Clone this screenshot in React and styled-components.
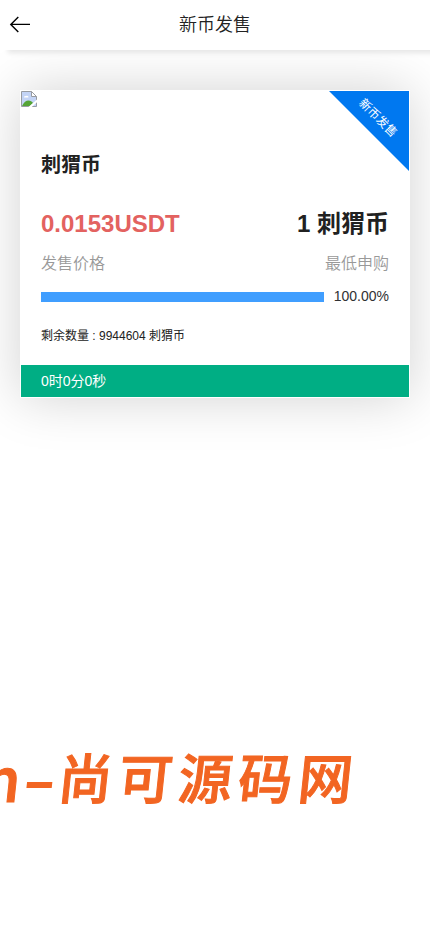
import React from 'react';
import styled, { createGlobalStyle } from 'styled-components';


export default function App(){
    return(
        <>
            <GlobalStyle />
            <Page>
                <Header>
                    <BackButton aria-label="back">
                        <svg width="22" height="18" viewBox="0 0 22 18" fill="none" stroke="#000" strokeWidth="1.4">
                            <path d="M21 8.4H2M9.3 .9L1.8 8.4L9.3 15.9" />
                        </svg>
                    </BackButton>
                    <Title>新币发售</Title>
                </Header>
                <Card>
                    <Ribbon><RibbonText>新币发售</RibbonText></Ribbon>
                    <CoinLogo />
                    <Content>
                        <CoinName>刺猬币</CoinName>
                        <Row>
                            <Price>0.0153USDT</Price>
                            <Amount>1 刺猬币</Amount>
                        </Row>
                        <LabelRow>
                            <span>发售价格</span>
                            <span>最低申购</span>
                        </LabelRow>
                        <Progress>
                            <Track><Bar style={{ width: '100%' }} /></Track>
                            <Percent>100.00%</Percent>
                        </Progress>
                        <Remaining>剩余数量 : 9944604 刺猬币</Remaining>
                    </Content>
                    <Countdown>0时0分0秒</Countdown>
                </Card>
                <Watermark>
                    <Latin>n</Latin>
                    <Dash>-</Dash>
                    <Name>尚可源码网</Name>
                </Watermark>
            </Page>
        </>
    )
}

// browser placeholder for a logo that did not load
function CoinLogo(){
    return(
        <LogoIcon width="16" height="16" viewBox="0 0 16 16">
            <path d="M.5.5H10.5L15.5 5.5V15.5H.5Z" fill="#c3d4f6" stroke="#989ca2" />
            <path d="M3 6.5C3 5 4.2 4.5 5 5.2C6 4.2 7.8 5 7.4 6.5Z" fill="#fff" />
            <path d="M1 15C3 11 5 9.5 7.5 9.5C9.5 9.5 11 10.5 12 12L9 15Z" fill="#55a436" />
            <path d="M10.5.5V5.5H15.5Z" fill="#fff" stroke="#989ca2" />
            <path d="M7.5 16L16 8.5V11.3L10.8 16Z" fill="#fff" />
        </LogoIcon>
    )
}


// STYLED COMPONENTS
const GlobalStyle = createGlobalStyle`
body{
    margin: 0;
    background: #fff;
    color: #212121;
    font-family: "Liberation Sans", "Noto Sans CJK SC", sans-serif;
}
`;

const Page = styled.div`
    position: relative;
    width: 430px;
    height: 932px;
    overflow: hidden;
`;

const Header = styled.header`
    position: relative;
    z-index: 1;
    display: grid;
    grid-template-columns: 40px 1fr 40px;
    align-items: center;
    height: 50px;
    background: #fff;
    box-shadow: 8px 3px 5px 0 #e6e6e6;
`;

const BackButton = styled.button`
    display: flex;
    padding: 0 0 0 9px;
    border: 0;
    background: none;
`;

const Title = styled.h1`
    margin: 0;
    font-size: 18px;
    font-weight: 350;
    line-height: 50px;
    text-align: center;
    color: #222;
`;

const Card = styled.section`
    position: relative;
    box-sizing: border-box;
    height: 308px;
    margin: 40px 20px 0;
    border: 1px solid #fff;
    background: #fff;
    box-shadow: 0 0 50px 0 rgba(0, 0, 0, .18);
`;

const LogoIcon = styled.svg`
    display: block;
`;

const Ribbon = styled.div`
    position: absolute;
    top: 0;
    right: 0;
    width: 80px;
    height: 80px;
    background: #0078f0;
    clip-path: polygon(0 0, 100% 0, 100% 100%);
`;

const RibbonText = styled.span`
    position: absolute;
    top: 18px;
    left: 24px;
    width: 50px;
    font-size: 12px;
    line-height: 18px;
    text-align: center;
    white-space: nowrap;
    color: #fff;
    transform: rotate(45deg);
`;

const Content = styled.div`
    box-sizing: border-box;
    height: 258px;
    padding: 42px 20px 0;
`;

const CoinName = styled.h2`
    margin: 0;
    font-size: 20px;
    line-height: 32px;
`;

const Row = styled.div`
    display: flex;
    justify-content: space-between;
    margin-top: 23px;
    font-size: 24px;
    font-weight: bold;
    line-height: 40px;
`;

const Price = styled.span`
    color: #e36260;
`;

const Amount = styled.span`
    color: #212121;
`;

const LabelRow = styled.div`
    display: flex;
    justify-content: space-between;
    margin-top: 4px;
    font-size: 16px;
    font-weight: 350;
    line-height: 32px;
    color: #999;
`;

const Progress = styled.div`
    display: flex;
    align-items: center;
    gap: 10px;
    height: 20px;
    margin-top: 7px;
`;

const Track = styled.div`
    flex: 1;
    height: 10px;
    background: #ebeef5;
`;

const Bar = styled.div`
    height: 100%;
    background: #409eff;
`;

const Percent = styled.span`
    margin-top: -3px;
    font-size: 14px;
    color: #303133;
`;

const Remaining = styled.p`
    margin: 19px 0 0;
    font-size: 12px;
    line-height: 20px;
`;

const Countdown = styled.div`
    height: 32px;
    padding-left: 20px;
    background: #00ae84;
    font-size: 14px;
    line-height: 32px;
    color: #fff;
`;

const Watermark = styled.div`
    position: absolute;
    top: 736px;
    left: -16px;
    display: flex;
    align-items: center;
    height: 80px;
    font-family: "Noto Sans CJK SC", sans-serif;
    font-weight: 500;
    line-height: 80px;
    white-space: nowrap;
    color: #f26522;
    -webkit-text-stroke: 1px #f26522;
    transform: skewX(-6deg);
`;

const Latin = styled.span`
    width: 46px;
    font-size: 60px;
`;

const Dash = styled.span`
    width: 23px;
    margin-right: 6px;
    font-size: 60px;
    transform: scaleX(1.5);
`;

const Name = styled.span`
    font-size: 54px;
    letter-spacing: 6px;
`;
